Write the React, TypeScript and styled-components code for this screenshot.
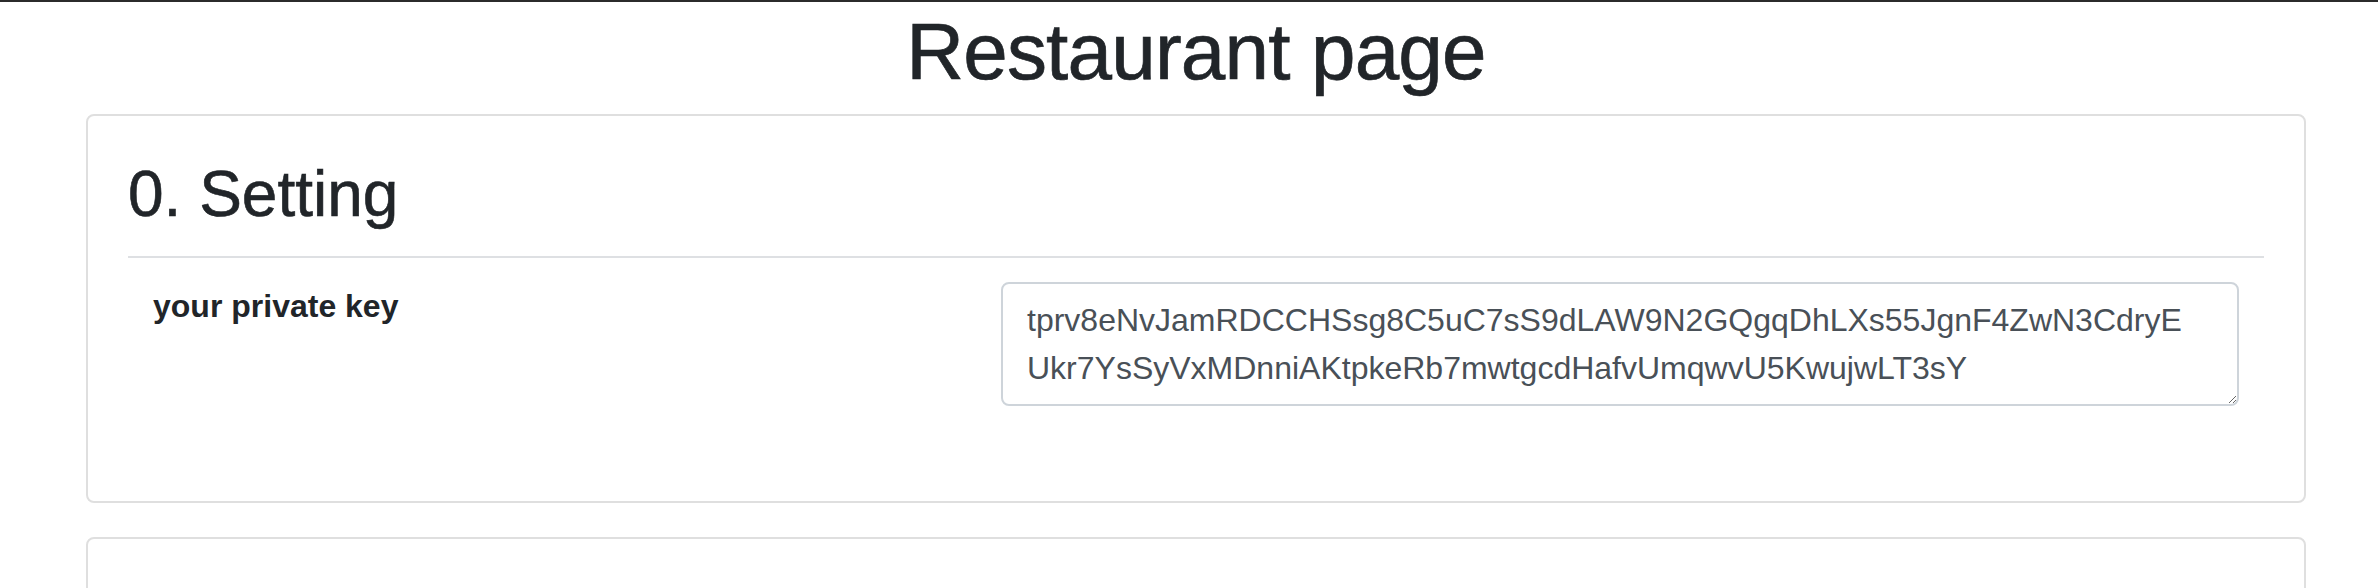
import React from "react";
import styled, { createGlobalStyle } from "styled-components";

const GlobalStyle = createGlobalStyle`
  html, body {
    margin: 0;
    padding: 0;
    background: #ffffff;
  }
  body {
    font-family: "Liberation Sans", Arial, sans-serif;
    color: #212529;
    overflow: hidden;
  }
  *, *::before, *::after {
    box-sizing: border-box;
  }
`;

const TopBar = styled.div`
  height: 2px;
  background: #2b2b2b;
`;

const Page = styled.main`
  padding: 0 72px 0 86px;
`;

const Title = styled.h1`
  margin: 2px 0 14px;
  font-size: 80px;
  font-weight: 500;
  line-height: 1.2;
  letter-spacing: -0.8px;
  text-align: center;
  -webkit-text-stroke: 0.7px #212529;
`;

const Card = styled.section<{ $minHeight?: number }>`
  border: 2px solid #dfdfdf;
  border-radius: 8px;
  margin-bottom: 34px;
  min-height: ${(p) => (p.$minHeight ? `${p.$minHeight}px` : "auto")};
`;

const CardBody = styled.div`
  padding: 40px;
`;

const SectionTitle = styled.h2`
  margin: 0 0 23px;
  font-size: 64px;
  font-weight: 500;
  line-height: 1.2;
  -webkit-text-stroke: 0.6px #212529;
`;

const Divider = styled.hr`
  margin: 0;
  border: 0;
  border-top: 2px solid #dee0e3;
`;

const FieldRow = styled.div`
  display: flex;
  justify-content: space-between;
  align-items: flex-start;
  padding: 0 25px;
  margin: 24px 0 55px;
`;

const FieldLabel = styled.label`
  font-size: 32px;
  font-weight: 700;
  line-height: 48px;
`;

const KeyInput = styled.textarea`
  display: block;
  width: 1238px;
  height: 124px;
  padding: 12px 45px 12px 24px;
  font-family: inherit;
  font-size: 32px;
  line-height: 1.5;
  color: #495057;
  background: #ffffff;
  border: 2px solid #ced4da;
  border-radius: 8px;
  outline: none;
`;

const PRIVATE_KEY =
  "tprv8eNvJamRDCCHSsg8C5uC7sS9dLAW9N2GQgqDhLXs55JgnF4ZwN3CdryEUkr7YsSyVxMDnniAKtpkeRb7mwtgcdHafvUmqwvU5KwujwLT3sY";

export default function App() {
  return (
    <>
      <GlobalStyle />
      <TopBar />
      <Page>
        <Title>Restaurant page</Title>
        <Card>
          <CardBody>
            <SectionTitle>0. Setting</SectionTitle>
            <Divider />
            <FieldRow>
              <FieldLabel htmlFor="private-key">your private key</FieldLabel>
              <KeyInput id="private-key" rows={2} readOnly defaultValue={PRIVATE_KEY} />
            </FieldRow>
          </CardBody>
        </Card>
        <Card $minHeight={300} />
      </Page>
    </>
  );
}
